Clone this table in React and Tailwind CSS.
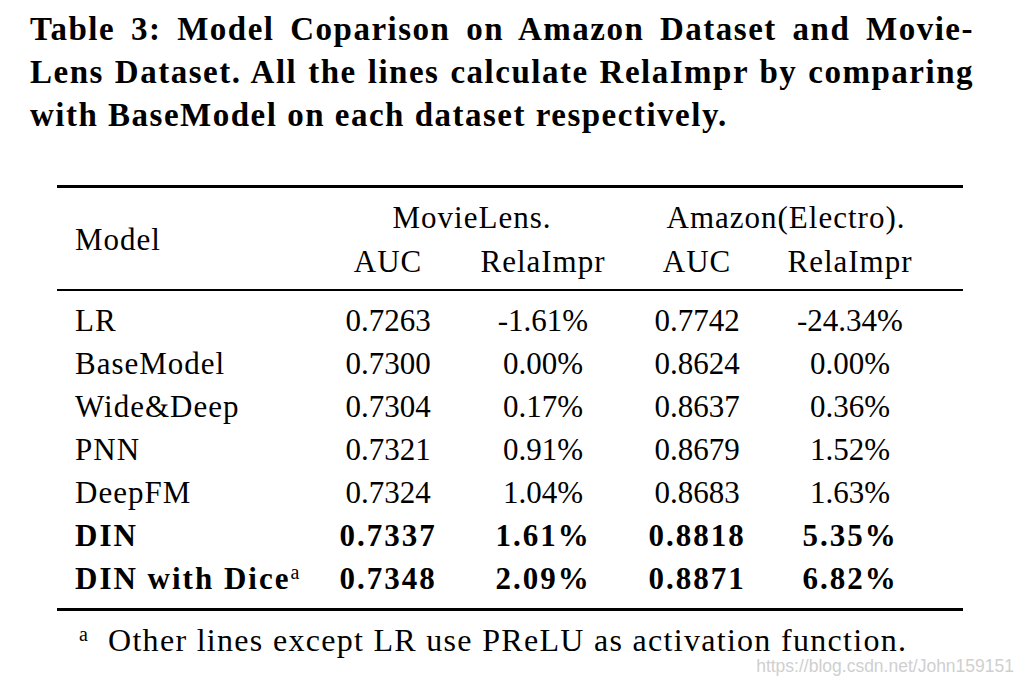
import React from 'react'

const rows = [
  { name: 'LR', a1: '0.7263', r1: '-1.61%', a2: '0.7742', r2: '-24.34%' },
  { name: 'BaseModel', a1: '0.7300', r1: '0.00%', a2: '0.8624', r2: '0.00%' },
  { name: 'Wide&Deep', a1: '0.7304', r1: '0.17%', a2: '0.8637', r2: '0.36%' },
  { name: 'PNN', a1: '0.7321', r1: '0.91%', a2: '0.8679', r2: '1.52%' },
  { name: 'DeepFM', a1: '0.7324', r1: '1.04%', a2: '0.8683', r2: '1.63%' },
  { name: 'DIN', a1: '0.7337', r1: '1.61%', a2: '0.8818', r2: '5.35%', bold: true },
  { name: 'DIN with Dice', a1: '0.7348', r1: '2.09%', a2: '0.8871', r2: '6.82%', bold: true, sup: true },
]

const cols = 'grid grid-cols-[266px_130px_180px_128px_178px] pr-[24px]'

export default function App() {
  return (
    <div className='w-[1022px] h-[684px] bg-white text-black overflow-hidden relative font-["Liberation_Serif","DejaVu_Serif",serif]'>
      {/* caption */}
      <div className='pl-[30px] pr-[48px] pt-[8px] font-bold text-[33px] leading-[43px] tracking-[1.5px]'>
        <div className='[text-align-last:justify]'>Table 3: Model Coparison on Amazon Dataset and Movie-</div>
        <div className='[text-align-last:justify]'>Lens Dataset. All the lines calculate RelaImpr by comparing</div>
        <div>with BaseModel on each dataset respectively.</div>
      </div>

      {/* table */}
      <div className='ml-[57px] w-[906px] mt-[48px] text-[31px]'>
        <div className='h-[3px] bg-black'></div>
        <div className={cols + ' pt-[8px] pb-[5px] tracking-[1px]'}>
          <div className='row-span-2 flex items-center pl-[18px]'>Model</div>
          <div className='col-span-2 text-center leading-[44px] -ml-[12px]'>MovieLens.</div>
          <div className='col-span-2 text-center leading-[44px]'>Amazon(Electro).</div>
          <div className='text-center leading-[44px]'>AUC</div>
          <div className='text-center leading-[44px]'>RelaImpr</div>
          <div className='text-center leading-[44px]'>AUC</div>
          <div className='text-center leading-[44px]'>RelaImpr</div>
        </div>
        <div className='h-[2px] bg-black'></div>
        <div className='pt-[8px] pb-[8px]'>
          {rows.map(r => (
            <div key={r.name} className={cols + ' leading-[43px]' + (r.bold ? ' font-bold tracking-[2px]' : '')}>
              <div className={'pl-[18px]' + (r.bold ? '' : ' tracking-[1px]')}>
                {r.name}
                {r.sup && <sup className='text-[20px] font-normal tracking-normal'>a</sup>}
              </div>
              <div className='text-center'>{r.a1}</div>
              <div className='text-center'>{r.r1}</div>
              <div className='text-center'>{r.a2}</div>
              <div className='text-center'>{r.r2}</div>
            </div>
          ))}
        </div>
        <div className='h-[3px] bg-black'></div>
        <div className='flex items-start pl-[22px] pt-[8px] leading-[43px] text-[32px] tracking-[1.3px]'>
          <span className='text-[20px] leading-[30px] w-[29px]'>a</span>
          <span>Other lines except LR use PReLU as activation function.</span>
        </div>
      </div>

      <div className='absolute right-[8px] bottom-[5px] text-[17.5px] text-[#cfcfcf] font-["Liberation_Sans",Arial,sans-serif]'>
        https://blog.csdn.net/John159151
      </div>
    </div>
  )
}
